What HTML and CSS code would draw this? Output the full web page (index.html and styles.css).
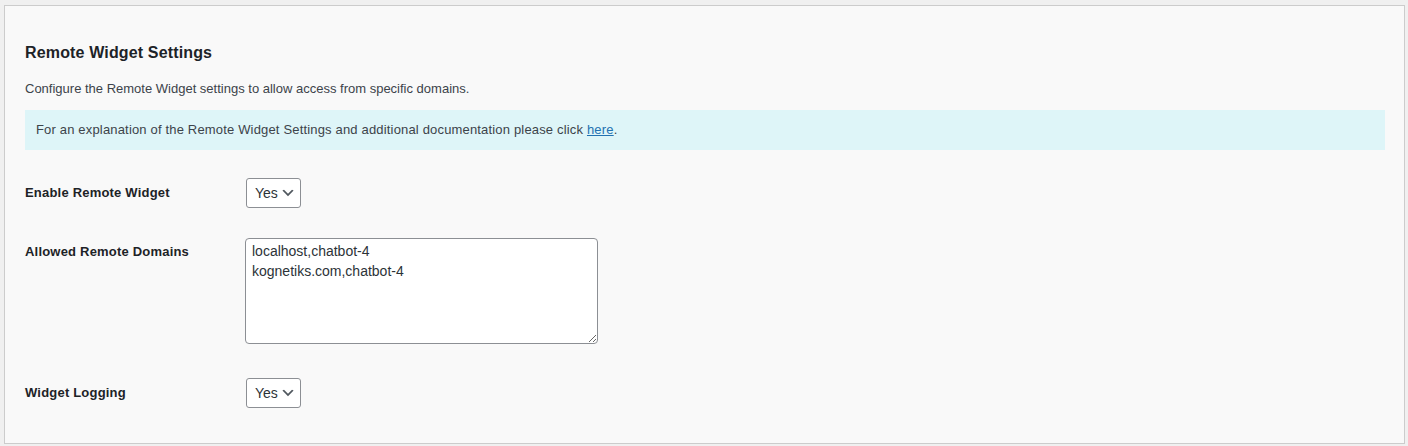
FILE: index.html
```html
<!DOCTYPE html>
<html lang="en">
<head>
<meta charset="utf-8">
<title>Remote Widget Settings</title>
<link rel="stylesheet" href="styles.css">
</head>
<body>
<div class="panel">
  <h2 class="title">Remote Widget Settings</h2>
  <p class="desc">Configure the Remote Widget settings to allow access from specific domains.</p>
  <div class="notice">
    <p>For an explanation of the Remote Widget Settings and additional documentation please click <a href="#">here</a>.</p>
  </div>
  <div class="form">
    <div class="row row-center">
      <label class="label">Enable Remote Widget</label>
      <div class="control">
        <div class="select-wrap">
          <select class="select"><option>Yes</option><option>No</option></select>
          <svg class="chev" viewBox="0 0 20 20" width="16" height="16" aria-hidden="true"><path d="M5 6l5 5 5-5 2 1-7 7-7-7 2-1z" fill="#50575e"/></svg>
        </div>
      </div>
    </div>
    <div class="row row-top">
      <label class="label label-top">Allowed Remote Domains</label>
      <div class="control">
        <textarea class="textarea">localhost,chatbot-4
kognetiks.com,chatbot-4</textarea>
      </div>
    </div>
    <div class="row row-center row-last">
      <label class="label">Widget Logging</label>
      <div class="control">
        <div class="select-wrap">
          <select class="select"><option>Yes</option><option>No</option></select>
          <svg class="chev" viewBox="0 0 20 20" width="16" height="16" aria-hidden="true"><path d="M5 6l5 5 5-5 2 1-7 7-7-7 2-1z" fill="#50575e"/></svg>
        </div>
      </div>
    </div>
  </div>
</div>
</body>
</html>
```

FILE: styles.css
```css
html, body {
  margin: 0;
  padding: 0;
}

body {
  background: #f0f0f0;
  padding: 5px 3px 2px 4px;
  font-family: "Liberation Sans", Arial, sans-serif;
  font-size: 13px;
  line-height: 20px;
  color: #3c434a;
}

.panel {
  background: #f9f9f9;
  border: 1px solid #cccccc;
  padding: 35px 19px 0 20px;
  height: 439px;
  box-sizing: border-box;
}

.title {
  margin: 0;
  font-size: 16px;
  line-height: 24px;
  font-weight: 700;
  letter-spacing: 0.15px;
  color: #1d2327;
}

.desc {
  margin: 14px 0 0;
  font-size: 13px;
  line-height: 20px;
  color: #3c434a;
}

.notice {
  margin-top: 11px;
  background: #def5f8;
  padding: 10px 11px;
}

.notice p {
  margin: 0;
  font-size: 13px;
  line-height: 20px;
  letter-spacing: 0.17px;
  color: #3c434a;
}

.notice a {
  color: #2271b1;
  text-decoration: underline;
}

.form {
  margin-top: 28px;
  display: flex;
  flex-direction: column;
  gap: 30px;
}

.row {
  display: grid;
  grid-template-columns: 220px 1fr;
}

.row-center {
  align-items: center;
}

.row-top {
  align-items: start;
}

.row-last {
  margin-top: 4px;
}

.label {
  font-size: 13px;
  line-height: 20px;
  font-weight: 700;
  letter-spacing: 0.2px;
  color: #1d2327;
}

.label-top {
  padding-top: 4px;
}

.control {
  display: flex;
}

.select-wrap {
  position: relative;
  margin-left: 1px;
}

.select {
  appearance: none;
  -webkit-appearance: none;
  display: block;
  width: 55px;
  height: 30px;
  margin: 0;
  padding: 0 20px 0 8px;
  border: 1px solid #8c8f94;
  border-radius: 3px;
  background: #ffffff;
  font-family: "Liberation Sans", Arial, sans-serif;
  font-size: 14px;
  line-height: 28px;
  color: #2c3338;
  box-sizing: border-box;
}

.chev {
  position: absolute;
  right: 5px;
  top: 7px;
  pointer-events: none;
}

.textarea {
  display: block;
  width: 353px;
  height: 106px;
  margin: 0;
  padding: 2px 6px;
  border: 1px solid #8c8f94;
  border-radius: 4px;
  background: #ffffff;
  font-family: "Liberation Sans", Arial, sans-serif;
  font-size: 14px;
  line-height: 20px;
  color: #2c3338;
  box-sizing: border-box;
}
```
